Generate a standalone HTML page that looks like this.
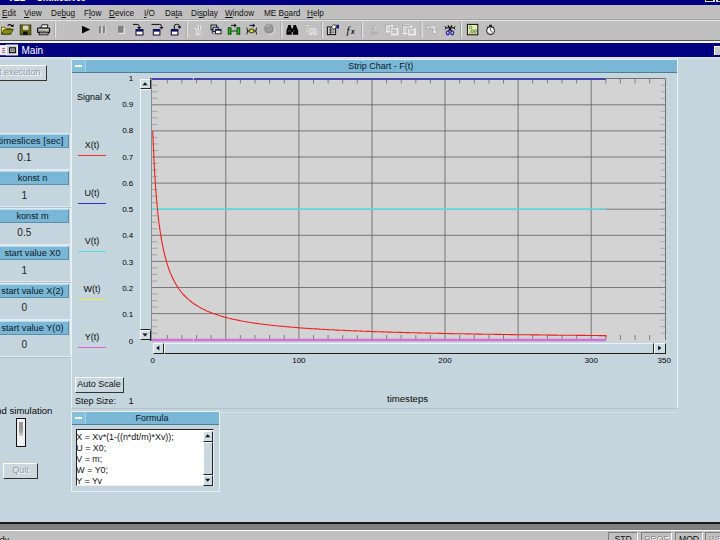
<!DOCTYPE html>
<html><head><meta charset="utf-8"><title>VEE - Main</title>
<style>
html,body{margin:0;padding:0;}
body{width:720px;height:540px;overflow:hidden;position:relative;background:#c5d5de;font-family:"Liberation Sans",sans-serif;font-size:9px;color:#0a0a0a;}
.abs{position:absolute;}
.t{position:absolute;white-space:nowrap;line-height:1;}
.c{text-align:center;}
.r{text-align:right;}
u{text-decoration:underline;}
/* top chrome */
#title{left:0;top:0;width:720px;height:4.5px;background:#000080;overflow:hidden;}
#menubar{left:0;top:4.5px;width:720px;height:15.5px;background:#c0c0c0;}
#menubar .t{top:5px;font-size:8.2px;color:#111;}
#tb{left:0;top:19px;width:720px;height:21px;background:#c0c0c0;border-top:1px solid #a4a4a4;box-shadow:inset 0 1px 0 #e4e4e4;box-sizing:border-box;}
.sep{position:absolute;top:23px;width:1px;height:15px;background:#8a8a8a;border-right:1px solid #eee;}
#tbline{left:0;top:39.5px;width:720px;height:1.5px;background:#555;}
#tbline2{left:0;top:41px;width:720px;height:2px;background:#f4f4f4;}
#maintitle{left:0;top:43px;width:720px;height:14px;background:#000080;}
#mainunder{left:0;top:57px;width:720px;height:3px;background:linear-gradient(#e2ecf1,#c5d5de);}
/* widgets */
.wframe{position:absolute;left:-4px;width:73px;height:35px;border:1px solid #dfe9ee;box-shadow:0 1px 0 #b2c1c9;background:#c5d5de;}
.whdr{position:absolute;left:-3px;width:71px;height:12.300px;background:#7ab6d6;border-bottom:1px solid #5f8ea8;border-right:1px solid #5f8ea8;border-top:1px solid #b5dcee;font-size:9.200px;line-height:12px;text-align:center;white-space:nowrap;color:#0a1a2a;}
.wval{position:absolute;left:0.300px;width:48px;text-align:center;font-size:10.100px;line-height:1;color:#222;}
.panel{position:absolute;border:1px solid #e9f1f5;background:#c5d5de;box-sizing:border-box;}
.ptitle{position:absolute;left:0;top:0;right:0;height:12px;padding-left:13px;background:#7ab6d6;border-bottom:1px solid #4f7d96;font-size:9px;line-height:12px;text-align:center;color:#0a1a2a;}
.pmenu{position:absolute;left:0;top:0;width:13px;height:12px;border-right:1px solid #9fd0e6;background:#86c0dc;}
.pmenu:after{content:"";position:absolute;left:3px;top:5px;width:7px;height:2px;background:#f4fbff;}
.btn{position:absolute;box-sizing:border-box;background:#c9d7df;border-top:1px solid #fff;border-left:1px solid #fff;border-right:1px solid #333;border-bottom:1px solid #333;font-size:9px;text-align:center;white-space:nowrap;}
.dis{color:#8f9aa0;text-shadow:1px 1px 0 #fff;}
.lg{position:absolute;left:78px;width:28px;height:1.3px;}
.lgt{position:absolute;left:72px;width:40px;text-align:center;font-size:9px;line-height:1;white-space:nowrap;}
.yl{position:absolute;left:109.3px;width:24px;text-align:right;font-size:8px;line-height:1;color:#000;}
.xl{position:absolute;top:356.5px;width:30px;text-align:center;font-size:8px;line-height:1;color:#000;}
.sb{position:absolute;box-sizing:border-box;background:#cfdde4;border-top:1px solid #fff;border-left:1px solid #fff;border-right:1px solid #222;border-bottom:1px solid #222;}
.fl{position:absolute;left:76.3px;font-size:8.9px;line-height:1;white-space:nowrap;color:#111;}
.stbox{position:absolute;top:532px;height:10px;box-sizing:border-box;border-top:1px solid #808080;border-left:1px solid #808080;border-right:1px solid #fff;background:#c0c0c0;font-size:8.6px;text-align:center;line-height:12.5px;color:#111;}
</style></head>
<body>
<!-- window title (cut off) -->
<div id="title" class="abs"><span class="t" style="left:8px;top:-5.6px;font-size:8.6px;font-weight:bold;color:#fff;word-spacing:2px">VEE - Untitled.vee</span>
<div class="abs" style="left:704.7px;top:-8px;width:10.3px;height:10.3px;background:#dcdcdc"><div class="abs" style="left:1.5px;top:5px;width:7px;height:3.8px;background:#000"></div></div><div class="abs" style="left:716px;top:-8px;width:10.3px;height:10.3px;background:#dcdcdc"><div class="abs" style="left:1.5px;top:5px;width:7px;height:3.8px;background:#000"></div></div></div>
<div id="menubar" class="abs">
<span class="t" style="left:2px"><u>E</u>dit</span>
<span class="t" style="left:24px"><u>V</u>iew</span>
<span class="t" style="left:51px">De<u>b</u>ug</span>
<span class="t" style="left:84px">F<u>l</u>ow</span>
<span class="t" style="left:109px"><u>D</u>evice</span>
<span class="t" style="left:144px"><u>I</u>/O</span>
<span class="t" style="left:165px">Da<u>t</u>a</span>
<span class="t" style="left:191px">Di<u>s</u>play</span>
<span class="t" style="left:225px"><u>W</u>indow</span>
<span class="t" style="left:264px">ME B<u>o</u>ard</span>
<span class="t" style="left:307px"><u>H</u>elp</span>
</div>
<div id="tb" class="abs"></div>
<svg class="abs" style="left:0;top:20px" width="720" height="20" viewBox="0 20 720 20">
<!-- separators -->
<g stroke-width="1">
<path d="M54.800 22V38M186.3 22V38M280.8 22V38M321.7 22V38M361.7 22V38M421 22V38M460.6 22V38" stroke="#9a9a9a" stroke-width="0.9"/>
<path d="M55.600 22V38M187.3 22V38M281.8 22V38M322.7 22V38M362.7 22V38M422 22V38M461.6 22V38" stroke="#f2f2f2" stroke-width="0.9"/>
</g>
<!-- open folder -->
<path d="M1.6 27.2h3.6l1 1.2h4.6v5.800h-9.200z" fill="#f0f060" stroke="#4a4a08" stroke-width="0.8"/>
<path d="M1.6 34.200l2.600-4.800h9.200l-3 4.800z" fill="#8a8a1a" stroke="#3a3a06" stroke-width="0.9"/>
<path d="M7.600 25.600q2.600-2 4.600 0.400" fill="none" stroke="#000" stroke-width="1.2"/><path d="M10.600 26.800h3v-2.800z" fill="#000"/>
<!-- save -->
<rect x="20.2" y="25" width="10.6" height="9.8" fill="#6a6a14" stroke="#2e2e06" stroke-width="0.9"/>
<rect x="23" y="25.6" width="5.4" height="4.2" fill="#d8d8c8"/>
<rect x="23" y="31.6" width="4.6" height="3.2" fill="#101010"/>
<!-- print -->
<path d="M40.600 28.200l1.400-3.400h6l-1 3.400z" fill="#fafafa" stroke="#111" stroke-width="0.9"/>
<rect x="37.600" y="28" width="12" height="4.600" rx="0.8" fill="#9c9c9c" stroke="#050505" stroke-width="1.1"/>
<path d="M38.400 29.600h10.400" stroke="#e4e4e4" stroke-width="0.8"/>
<rect x="39.200" y="32.200" width="8.800" height="2.600" fill="#f4f4f4" stroke="#0a0a0a" stroke-width="0.9"/>
<path d="M40 33.600h7" stroke="#555" stroke-width="0.600"/>
<rect x="46" y="30.300" width="1.600" height="1" fill="#e8e060"/>
<!-- play / pause / stop -->
<path d="M82 25.8v7.6l8.3-3.8z" fill="#050505"/>
<path d="M100.6 26.6v7.2M104.6 26.6v7.2" stroke="#fafafa" stroke-width="1.8"/>
<path d="M100 26v7.2M104 26v7.2" stroke="#7e7e7e" stroke-width="1.9"/>
<rect x="118.8" y="26.8" width="5.8" height="6.8" fill="#f8f8f8"/>
<rect x="118" y="26" width="5.6" height="6.8" fill="#808080"/>
<!-- step into / over / out -->
<g fill="#fff" stroke="#0a0a30" stroke-width="1">
<rect x="136" y="29.6" width="7" height="5.4"/><rect x="153.3" y="29.6" width="6.6" height="5.4"/><rect x="171.3" y="29.6" width="6.6" height="5.4"/>
</g>
<g fill="#10106a"><rect x="136" y="29.4" width="7" height="2.2"/><rect x="153.3" y="29.4" width="6.6" height="2.2"/><rect x="171.3" y="29.4" width="6.6" height="2.2"/></g>
<g fill="none" stroke="#0a0a0a" stroke-width="1">
<path d="M133 24.4h4.2q2 0 2 2v1"/><path d="M151.5 24.4h8q2 0 2 2v1"/><path d="M174.300 29.200v-3q0-1.800 2-1.800h1.200q2 0 2 2v0.600"/>
</g>
<path d="M137 27h4.4l-2.2 2.2zM159.3 27h4.4l-2.2 2.2zM177.300 26.600h4.400l-2.200 2.200z" fill="#0a0a0a"/>
<!-- hand disabled -->
<path d="M195.5 34.2v-3l-1.4-2.2 1.2-.6 1.4 1.4v-4.6h1.5v3.8l1.2-3.2h1.2v3.8h1.4v3.6l-1 1.6z" fill="#cecece" stroke="#ececec" stroke-width="0.900"/>
<path d="M195 33.800v-2.800l-1.200-2M197 25.400v4M199.500 25.600v3.400M201.800 29v3.600l-1 1.600" fill="none" stroke="#9c9c9c" stroke-width="0.700"/>
<!-- stacked windows -->
<rect x="211" y="25" width="5.6" height="4.6" fill="#d8d8e8" stroke="#0a0a0a" stroke-width="0.9"/>
<rect x="213" y="27.2" width="5.2" height="4.2" fill="#c8c8e0" stroke="#0a0a0a" stroke-width="0.9"/>
<rect x="215.6" y="29.4" width="5.4" height="4.4" fill="#fff" stroke="#0a0a20" stroke-width="0.9"/>
<rect x="215.6" y="29.2" width="5.4" height="1.6" fill="#14146a"/>
<path d="M212 30v2.6l1.6 1.4" fill="none" stroke="#111" stroke-width="0.8"/>
<!-- green bars -->
<rect x="228.300" y="27.800" width="2.700" height="6.400" fill="#1cc01c" stroke="#0a4a0a" stroke-width="1"/>
<rect x="237" y="27.800" width="2.700" height="6.400" fill="#1cc01c" stroke="#0a4a0a" stroke-width="1"/>
<path d="M231.400 31h5.400" stroke="#104810" stroke-width="1.100"/>
<path d="M231 25.400h4" stroke="#111" stroke-width="1"/><path d="M234.300 23.600v3.800l2.400-1.900z" fill="#050505"/>
<!-- yellow blob -->
<path d="M246.800 27.600q1.600 3.400 0 6.800M256.600 27.600q-1.600 3.400 0 6.800" fill="none" stroke="#222" stroke-width="1"/>
<path d="M247.600 31h8.200" stroke="#1a1a1a" stroke-width="1"/>
<ellipse cx="251.600" cy="30.900" rx="2.700" ry="2" fill="#8c9410" stroke="#33330a" stroke-width="0.800"/>
<ellipse cx="251.600" cy="30.900" rx="1.300" ry="1" fill="#f2f244"/>
<path d="M249.400 25.400h4" stroke="#111" stroke-width="1"/><path d="M252.800 23.600v3.800l2.400-1.900z" fill="#0a0a30"/>
<!-- gray ball -->
<circle cx="269.5" cy="29.4" r="5.2" fill="#f2f2f2"/>
<circle cx="269" cy="28.9" r="5.1" fill="#949494"/>
<path d="M266.5 27.2q1.2-2 3-1.8" stroke="#d8d8d8" stroke-width="0.9" fill="none"/>
<path d="M268 30.2q2.5 0.5 3-2.4" stroke="#b8b8b8" stroke-width="0.8" fill="none"/>
<!-- binoculars -->
<path d="M288.400 25h2.200l1.200 3.400v6.300h-5.400v-4.200zM293.600 25h2.200l2.400 5.500v4.200h-5.400v-6.300z" fill="#050505"/>
<rect x="291" y="28.600" width="2.600" height="3.400" fill="#050505"/>
<path d="M288.300 30.400v1.200M290.200 30.400v1.200M294 30.400v1.200" stroke="#c8c8c8" stroke-width="0.600"/>
<!-- find next disabled -->
<path d="M305.4 25.6h3.2M305.4 28h3M305.4 30.6h2.4" stroke="#f8f8f8" stroke-width="1.2"/>
<path d="M304.8 25h3.2M304.8 27.4h3M304.8 30h2.4" stroke="#a6a6a6" stroke-width="0.9"/>
<path d="M309.4 34.6v-3.2l1.2-2.8h1.6l.6 1.4.6-1.4h1.6l1.2 2.8v3.2h-2.4v-2.6h-1.8v2.600z" fill="#cdcdcd" stroke="#ececec" stroke-width="0.800"/>
<!-- properties -->
<rect x="327.4" y="27" width="8.2" height="7.6" fill="#f2f2f2" stroke="#080808" stroke-width="1"/>
<path d="M328.6 29.2h6M328.6 31h6M328.6 32.8h6M330.6 27.4v7" stroke="#111" stroke-width="0.7"/>
<path d="M331 27l2.2-2h3l-.4 3.400-2 .6z" fill="#fafafa" stroke="#111" stroke-width="0.7"/>
<rect x="336.400" y="24.8" width="2.6" height="3.6" fill="#14147a"/>
<!-- fx -->
<text x="346.400" y="33.6" font-family="'Liberation Serif',serif" font-style="italic" font-size="11" fill="#000">f</text>
<text x="351" y="34.200" font-family="'Liberation Sans',sans-serif" font-weight="bold" font-style="italic" font-size="6.500" fill="#080808">x</text>
<!-- cut disabled -->
<path d="M372.400 25.400l3.200 6.200M376.200 25.400l-3.200 6.200" stroke="#fafafa" stroke-width="1"/>
<path d="M371.800 25l3.200 6.200M375.600 25l-3.200 6.200" stroke="#9c9c9c" stroke-width="0.9"/>
<circle cx="372.200" cy="33" r="1.300" fill="none" stroke="#a4a4a4" stroke-width="0.8"/><circle cx="375.600" cy="33" r="1.300" fill="none" stroke="#a4a4a4" stroke-width="0.8"/>
<!-- copy disabled -->
<rect x="386.400" y="25.400" width="6" height="6.400" fill="#d2d2d2" stroke="#fafafa" stroke-width="1"/>
<rect x="391.400" y="28.400" width="6.400" height="6.400" fill="#d2d2d2" stroke="#fafafa" stroke-width="1"/>
<path d="M385.800 31.400v-6.600h5.600M390.800 34.400v-6.600h6" fill="none" stroke="#a2a2a2" stroke-width="0.8"/>
<path d="M392.600 30.400h3.600M392.600 32.200h3.600" stroke="#a8a8a8" stroke-width="0.7"/>
<!-- paste disabled -->
<rect x="403.400" y="26" width="8" height="7.600" fill="#d0d0d0" stroke="#fafafa" stroke-width="1"/>
<rect x="405.400" y="24.800" width="4" height="2" fill="#b4b4b4" stroke="#f4f4f4" stroke-width="0.6"/>
<rect x="408.400" y="28.800" width="6.800" height="6" fill="#d6d6d6" stroke="#fafafa" stroke-width="1"/>
<path d="M402.800 33v-7.400h8M407.800 34.400v-6h6.600" fill="none" stroke="#a2a2a2" stroke-width="0.8"/>
<path d="M409.600 31h4M409.600 32.800h4" stroke="#a8a8a8" stroke-width="0.7"/>
<!-- disabled boxes -->
<rect x="426.400" y="25.800" width="4" height="3.200" fill="#d8d8d8" stroke="#a8a8a8" stroke-width="0.8"/>
<rect x="432.800" y="29.800" width="4" height="3.600" fill="#e8e8e8" stroke="#a8a8a8" stroke-width="0.8"/>
<path d="M430.800 27h3.600v2.600" fill="none" stroke="#f6f6f6" stroke-width="1"/>
<!-- blue scissors/tools -->
<path d="M445 26.200q1.800 1.600 0 3.200M455 26.200q-1.800 1.600 0 3.200" fill="none" stroke="#111" stroke-width="1"/>
<path d="M446 27.800h8" stroke="#111" stroke-width="1.100"/>
<path d="M448 25.400l3.600 6M452 25.400l-3.600 6" stroke="#0a0a0a" stroke-width="1.200"/>
<ellipse cx="447.800" cy="32.800" rx="1.500" ry="2" fill="none" stroke="#2424b4" stroke-width="1.200"/>
<ellipse cx="452.200" cy="32.800" rx="1.500" ry="2" fill="none" stroke="#2424b4" stroke-width="1.200"/>
<!-- picture -->
<rect x="467.400" y="24.400" width="10.400" height="10.400" fill="#ecebb4" stroke="#0a0a0a" stroke-width="1"/>
<circle cx="470.600" cy="27.400" r="1.300" fill="#f4f4c0" stroke="#2e8a2e" stroke-width="0.8"/>
<circle cx="472.200" cy="31" r="1.300" fill="#f4f4c0" stroke="#2e8a2e" stroke-width="0.8"/>
<circle cx="475.200" cy="31" r="1.300" fill="#f4f4c0" stroke="#2e8a2e" stroke-width="0.8"/>
<path d="M469 33h7.600" stroke="#7a7a30" stroke-width="0.600"/>
<!-- stopwatch -->
<circle cx="490.600" cy="30.600" r="4" fill="#f4f4f4" stroke="#101010" stroke-width="1"/>
<path d="M489.600 25.200h2v1.600h-2zM487 26.600l1.200 1.200M494.200 26.600l-1.200 1.200" stroke="#111" stroke-width="0.900" fill="#111"/>
<path d="M490.600 30.600v-2.600M490.600 30.600l1.800 1.200" stroke="#222" stroke-width="0.700" fill="none"/>
<path d="M487.600 32.600q3 2.400 6-0.200" stroke="#888" stroke-width="0.800" fill="none"/>
</svg>

<div id="tbline" class="abs"></div><div id="tbline2" class="abs"></div>
<div id="maintitle" class="abs">
<span class="t" style="left:21.5px;top:3.3px;font-size:10px;color:#fff">Main</span>
</div>
<svg class="abs" style="left:0;top:43px" width="60" height="14" viewBox="0 43 60 14">
<rect x="-4" y="45.400" width="9.400" height="9.400" fill="#f6eef2" stroke="#fafafa" stroke-width="0.800"/>
<path d="M2 48.400h3M2 50.400h3M2 52.400h3" stroke="#a04a7a" stroke-width="0.900"/>
<rect x="6.400" y="45.200" width="11" height="9.600" fill="#c4c4c4" stroke="#fafafa" stroke-width="1.300"/>
<rect x="9.600" y="47.800" width="5.800" height="4.800" fill="#b8b8b8" stroke="#101010" stroke-width="1.1"/>
<path d="M11.700 49.300v2M13.300 49.300v2" stroke="#333" stroke-width="0.700"/>
</svg>
<div class="abs" style="left:714px;top:46px;width:10px;height:9px;background:#c8c8c8;border-top:1px solid #fff;border-left:1px solid #fff;box-sizing:border-box"></div>

<div id="mainunder" class="abs"></div>

<!-- left column -->
<div class="btn dis" style="left:-40px;top:65px;width:87px;height:16px;line-height:13.500px;font-size:9px;text-align:right;padding-right:5.500px;background:#ccd8de">Start executon</div>

<div class="wframe" style="top:133.0px"></div>
<div class="whdr" style="top:133.8px;font-size:9.6px;text-align:right;padding-right:4.500px;width:66.500px">timeslices [sec]</div>
<div class="wval" style="top:153.2px">0.1</div>
<div class="wframe" style="top:170.4px"></div>
<div class="whdr" style="top:171.2px">konst n</div>
<div class="wval" style="top:190.6px">1</div>
<div class="wframe" style="top:207.9px"></div>
<div class="whdr" style="top:208.7px">konst m</div>
<div class="wval" style="top:228.1px">0.5</div>
<div class="wframe" style="top:245.4px"></div>
<div class="whdr" style="top:246.2px">start value X0</div>
<div class="wval" style="top:265.6px">1</div>
<div class="wframe" style="top:282.8px"></div>
<div class="whdr" style="top:283.6px">start value X(2)</div>
<div class="wval" style="top:303.0px">0</div>
<div class="wframe" style="top:320.2px"></div>
<div class="whdr" style="top:321.1px">start value Y(0)</div>
<div class="wval" style="top:340.4px">0</div>

<span class="t" style="left:-10px;top:406px;font-size:9.5px">End simulation</span>
<div class="abs" style="left:16px;top:418px;width:10px;height:29px;box-sizing:border-box;border:1.5px solid #111;background:#f2f2f2"><div class="abs" style="left:1.5px;top:2.5px;width:4px;height:14px;background:linear-gradient(#9a9a9a 60%,#d8d8d8)"></div></div>
<div class="btn dis" style="left:3px;top:463px;width:35px;height:16px;line-height:13px;background:#ccd8de">Quit</div>

<!-- strip chart panel -->
<div class="abs" style="left:220px;top:411.500px;width:458px;height:1px;background:#d3e0e7"></div>
<div class="panel" style="left:71px;top:59px;width:606.500px;height:350px;border-bottom-color:#b4c3cb">
<div class="ptitle">Strip Chart - F(t)<div class="pmenu"></div></div>
</div>
<span class="t" style="left:77px;top:93px;font-size:9px">Signal X</span>
<span class="lgt" style="top:140.7px">X(t)</span>
<div class="lg" style="top:154.5px;background:#f03030"></div>
<span class="lgt" style="top:188.8px">U(t)</span>
<div class="lg" style="top:202.6px;background:#3030c8"></div>
<span class="lgt" style="top:236.9px">V(t)</span>
<div class="lg" style="top:250.7px;background:#50e0e0"></div>
<span class="lgt" style="top:285.0px">W(t)</span>
<div class="lg" style="top:298.8px;background:#e8e840"></div>
<span class="lgt" style="top:333.1px">Y(t)</span>
<div class="lg" style="top:346.9px;background:#e060e0"></div>
<span class="yl" style="top:74.6px">1</span>
<span class="yl" style="top:100.9px">0.9</span>
<span class="yl" style="top:127.2px">0.8</span>
<span class="yl" style="top:153.5px">0.7</span>
<span class="yl" style="top:179.8px">0.6</span>
<span class="yl" style="top:206.1px">0.5</span>
<span class="yl" style="top:232.4px">0.4</span>
<span class="yl" style="top:258.7px">0.3</span>
<span class="yl" style="top:285.0px">0.2</span>
<span class="yl" style="top:311.3px">0.1</span>
<span class="yl" style="top:337.6px">0</span>
<span class="xl" style="left:137.7px">0</span>
<span class="xl" style="left:283.9px">100</span>
<span class="xl" style="left:430.0px">200</span>
<span class="xl" style="left:576.2px">300</span>
<span class="xl" style="left:649.3px">350</span>
<svg class="abs" style="left:0;top:0" width="720" height="540" viewBox="0 0 720 540">
<rect x="151.5" y="78" width="514" height="263" fill="#d3d3d3"/>
<line x1="152" x2="665.5" y1="313.6" y2="313.6" stroke="#585858" stroke-width="0.75"/>
<line x1="152" x2="665.5" y1="287.5" y2="287.5" stroke="#585858" stroke-width="0.75"/>
<line x1="152" x2="665.5" y1="261.4" y2="261.4" stroke="#585858" stroke-width="0.75"/>
<line x1="152" x2="665.5" y1="235.3" y2="235.3" stroke="#585858" stroke-width="0.75"/>
<line x1="152" x2="665.5" y1="209.2" y2="209.2" stroke="#585858" stroke-width="0.75"/>
<line x1="152" x2="665.5" y1="183.1" y2="183.1" stroke="#585858" stroke-width="0.75"/>
<line x1="152" x2="665.5" y1="157.0" y2="157.0" stroke="#585858" stroke-width="0.75"/>
<line x1="152" x2="665.5" y1="130.9" y2="130.9" stroke="#585858" stroke-width="0.75"/>
<line x1="152" x2="665.5" y1="104.8" y2="104.8" stroke="#585858" stroke-width="0.75"/>
<line x1="225.8" x2="225.8" y1="79" y2="340" stroke="#585858" stroke-width="0.75"/>
<line x1="298.9" x2="298.9" y1="79" y2="340" stroke="#585858" stroke-width="0.75"/>
<line x1="372.0" x2="372.0" y1="79" y2="340" stroke="#585858" stroke-width="0.75"/>
<line x1="445.0" x2="445.0" y1="79" y2="340" stroke="#585858" stroke-width="0.75"/>
<line x1="518.1" x2="518.1" y1="79" y2="340" stroke="#585858" stroke-width="0.75"/>
<line x1="591.2" x2="591.2" y1="79" y2="340" stroke="#585858" stroke-width="0.75"/>
<line x1="152" x2="157.5" y1="333.2" y2="333.2" stroke="#909090" stroke-width="0.7"/>
<line x1="660.5" x2="665.5" y1="333.2" y2="333.2" stroke="#9a9a9a" stroke-width="0.7"/>
<line x1="152" x2="157.5" y1="326.6" y2="326.6" stroke="#909090" stroke-width="0.7"/>
<line x1="660.5" x2="665.5" y1="326.6" y2="326.6" stroke="#9a9a9a" stroke-width="0.7"/>
<line x1="152" x2="157.5" y1="320.1" y2="320.1" stroke="#909090" stroke-width="0.7"/>
<line x1="660.5" x2="665.5" y1="320.1" y2="320.1" stroke="#9a9a9a" stroke-width="0.7"/>
<line x1="152" x2="157.5" y1="307.1" y2="307.1" stroke="#909090" stroke-width="0.7"/>
<line x1="660.5" x2="665.5" y1="307.1" y2="307.1" stroke="#9a9a9a" stroke-width="0.7"/>
<line x1="152" x2="157.5" y1="300.6" y2="300.6" stroke="#909090" stroke-width="0.7"/>
<line x1="660.5" x2="665.5" y1="300.6" y2="300.6" stroke="#9a9a9a" stroke-width="0.7"/>
<line x1="152" x2="157.5" y1="294.0" y2="294.0" stroke="#909090" stroke-width="0.7"/>
<line x1="660.5" x2="665.5" y1="294.0" y2="294.0" stroke="#9a9a9a" stroke-width="0.7"/>
<line x1="152" x2="157.5" y1="281.0" y2="281.0" stroke="#909090" stroke-width="0.7"/>
<line x1="660.5" x2="665.5" y1="281.0" y2="281.0" stroke="#9a9a9a" stroke-width="0.7"/>
<line x1="152" x2="157.5" y1="274.4" y2="274.4" stroke="#909090" stroke-width="0.7"/>
<line x1="660.5" x2="665.5" y1="274.4" y2="274.4" stroke="#9a9a9a" stroke-width="0.7"/>
<line x1="152" x2="157.5" y1="267.9" y2="267.9" stroke="#909090" stroke-width="0.7"/>
<line x1="660.5" x2="665.5" y1="267.9" y2="267.9" stroke="#9a9a9a" stroke-width="0.7"/>
<line x1="152" x2="157.5" y1="254.9" y2="254.9" stroke="#909090" stroke-width="0.7"/>
<line x1="660.5" x2="665.5" y1="254.9" y2="254.9" stroke="#9a9a9a" stroke-width="0.7"/>
<line x1="152" x2="157.5" y1="248.3" y2="248.3" stroke="#909090" stroke-width="0.7"/>
<line x1="660.5" x2="665.5" y1="248.3" y2="248.3" stroke="#9a9a9a" stroke-width="0.7"/>
<line x1="152" x2="157.5" y1="241.8" y2="241.8" stroke="#909090" stroke-width="0.7"/>
<line x1="660.5" x2="665.5" y1="241.8" y2="241.8" stroke="#9a9a9a" stroke-width="0.7"/>
<line x1="152" x2="157.5" y1="228.8" y2="228.8" stroke="#909090" stroke-width="0.7"/>
<line x1="660.5" x2="665.5" y1="228.8" y2="228.8" stroke="#9a9a9a" stroke-width="0.7"/>
<line x1="152" x2="157.5" y1="222.2" y2="222.2" stroke="#909090" stroke-width="0.7"/>
<line x1="660.5" x2="665.5" y1="222.2" y2="222.2" stroke="#9a9a9a" stroke-width="0.7"/>
<line x1="152" x2="157.5" y1="215.7" y2="215.7" stroke="#909090" stroke-width="0.7"/>
<line x1="660.5" x2="665.5" y1="215.7" y2="215.7" stroke="#9a9a9a" stroke-width="0.7"/>
<line x1="152" x2="157.5" y1="202.7" y2="202.7" stroke="#909090" stroke-width="0.7"/>
<line x1="660.5" x2="665.5" y1="202.7" y2="202.7" stroke="#9a9a9a" stroke-width="0.7"/>
<line x1="152" x2="157.5" y1="196.1" y2="196.1" stroke="#909090" stroke-width="0.7"/>
<line x1="660.5" x2="665.5" y1="196.1" y2="196.1" stroke="#9a9a9a" stroke-width="0.7"/>
<line x1="152" x2="157.5" y1="189.6" y2="189.6" stroke="#909090" stroke-width="0.7"/>
<line x1="660.5" x2="665.5" y1="189.6" y2="189.6" stroke="#9a9a9a" stroke-width="0.7"/>
<line x1="152" x2="157.5" y1="176.6" y2="176.6" stroke="#909090" stroke-width="0.7"/>
<line x1="660.5" x2="665.5" y1="176.6" y2="176.6" stroke="#9a9a9a" stroke-width="0.7"/>
<line x1="152" x2="157.5" y1="170.0" y2="170.0" stroke="#909090" stroke-width="0.7"/>
<line x1="660.5" x2="665.5" y1="170.0" y2="170.0" stroke="#9a9a9a" stroke-width="0.7"/>
<line x1="152" x2="157.5" y1="163.5" y2="163.5" stroke="#909090" stroke-width="0.7"/>
<line x1="660.5" x2="665.5" y1="163.5" y2="163.5" stroke="#9a9a9a" stroke-width="0.7"/>
<line x1="152" x2="157.5" y1="150.5" y2="150.5" stroke="#909090" stroke-width="0.7"/>
<line x1="660.5" x2="665.5" y1="150.5" y2="150.5" stroke="#9a9a9a" stroke-width="0.7"/>
<line x1="152" x2="157.5" y1="143.9" y2="143.9" stroke="#909090" stroke-width="0.7"/>
<line x1="660.5" x2="665.5" y1="143.9" y2="143.9" stroke="#9a9a9a" stroke-width="0.7"/>
<line x1="152" x2="157.5" y1="137.4" y2="137.4" stroke="#909090" stroke-width="0.7"/>
<line x1="660.5" x2="665.5" y1="137.4" y2="137.4" stroke="#9a9a9a" stroke-width="0.7"/>
<line x1="152" x2="157.5" y1="124.4" y2="124.4" stroke="#909090" stroke-width="0.7"/>
<line x1="660.5" x2="665.5" y1="124.4" y2="124.4" stroke="#9a9a9a" stroke-width="0.7"/>
<line x1="152" x2="157.5" y1="117.8" y2="117.8" stroke="#909090" stroke-width="0.7"/>
<line x1="660.5" x2="665.5" y1="117.8" y2="117.8" stroke="#9a9a9a" stroke-width="0.7"/>
<line x1="152" x2="157.5" y1="111.3" y2="111.3" stroke="#909090" stroke-width="0.7"/>
<line x1="660.5" x2="665.5" y1="111.3" y2="111.3" stroke="#9a9a9a" stroke-width="0.7"/>
<line x1="152" x2="157.5" y1="98.3" y2="98.3" stroke="#909090" stroke-width="0.7"/>
<line x1="660.5" x2="665.5" y1="98.3" y2="98.3" stroke="#9a9a9a" stroke-width="0.7"/>
<line x1="152" x2="157.5" y1="91.8" y2="91.8" stroke="#909090" stroke-width="0.7"/>
<line x1="660.5" x2="665.5" y1="91.8" y2="91.8" stroke="#9a9a9a" stroke-width="0.7"/>
<line x1="152" x2="157.5" y1="85.2" y2="85.2" stroke="#909090" stroke-width="0.7"/>
<line x1="660.5" x2="665.5" y1="85.2" y2="85.2" stroke="#9a9a9a" stroke-width="0.7"/>
<line x1="167.3" x2="167.3" y1="79" y2="83.5" stroke="#6a6a6a" stroke-width="0.8"/>
<line x1="167.3" x2="167.3" y1="335" y2="340" stroke="#6a6a6a" stroke-width="0.8"/>
<line x1="181.9" x2="181.9" y1="79" y2="83.5" stroke="#6a6a6a" stroke-width="0.8"/>
<line x1="181.9" x2="181.9" y1="335" y2="340" stroke="#6a6a6a" stroke-width="0.8"/>
<line x1="196.6" x2="196.6" y1="79" y2="83.5" stroke="#6a6a6a" stroke-width="0.8"/>
<line x1="196.6" x2="196.6" y1="335" y2="340" stroke="#6a6a6a" stroke-width="0.8"/>
<line x1="211.2" x2="211.2" y1="79" y2="83.5" stroke="#6a6a6a" stroke-width="0.8"/>
<line x1="211.2" x2="211.2" y1="335" y2="340" stroke="#6a6a6a" stroke-width="0.8"/>
<line x1="240.4" x2="240.4" y1="79" y2="83.5" stroke="#6a6a6a" stroke-width="0.8"/>
<line x1="240.4" x2="240.4" y1="335" y2="340" stroke="#6a6a6a" stroke-width="0.8"/>
<line x1="255.0" x2="255.0" y1="79" y2="83.5" stroke="#6a6a6a" stroke-width="0.8"/>
<line x1="255.0" x2="255.0" y1="335" y2="340" stroke="#6a6a6a" stroke-width="0.8"/>
<line x1="269.6" x2="269.6" y1="79" y2="83.5" stroke="#6a6a6a" stroke-width="0.8"/>
<line x1="269.6" x2="269.6" y1="335" y2="340" stroke="#6a6a6a" stroke-width="0.8"/>
<line x1="284.3" x2="284.3" y1="79" y2="83.5" stroke="#6a6a6a" stroke-width="0.8"/>
<line x1="284.3" x2="284.3" y1="335" y2="340" stroke="#6a6a6a" stroke-width="0.8"/>
<line x1="313.5" x2="313.5" y1="79" y2="83.5" stroke="#6a6a6a" stroke-width="0.8"/>
<line x1="313.5" x2="313.5" y1="335" y2="340" stroke="#6a6a6a" stroke-width="0.8"/>
<line x1="328.1" x2="328.1" y1="79" y2="83.5" stroke="#6a6a6a" stroke-width="0.8"/>
<line x1="328.1" x2="328.1" y1="335" y2="340" stroke="#6a6a6a" stroke-width="0.8"/>
<line x1="342.7" x2="342.7" y1="79" y2="83.5" stroke="#6a6a6a" stroke-width="0.8"/>
<line x1="342.7" x2="342.7" y1="335" y2="340" stroke="#6a6a6a" stroke-width="0.8"/>
<line x1="357.3" x2="357.3" y1="79" y2="83.5" stroke="#6a6a6a" stroke-width="0.8"/>
<line x1="357.3" x2="357.3" y1="335" y2="340" stroke="#6a6a6a" stroke-width="0.8"/>
<line x1="386.6" x2="386.6" y1="79" y2="83.5" stroke="#6a6a6a" stroke-width="0.8"/>
<line x1="386.6" x2="386.6" y1="335" y2="340" stroke="#6a6a6a" stroke-width="0.8"/>
<line x1="401.2" x2="401.2" y1="79" y2="83.5" stroke="#6a6a6a" stroke-width="0.8"/>
<line x1="401.2" x2="401.2" y1="335" y2="340" stroke="#6a6a6a" stroke-width="0.8"/>
<line x1="415.8" x2="415.8" y1="79" y2="83.5" stroke="#6a6a6a" stroke-width="0.8"/>
<line x1="415.8" x2="415.8" y1="335" y2="340" stroke="#6a6a6a" stroke-width="0.8"/>
<line x1="430.4" x2="430.4" y1="79" y2="83.5" stroke="#6a6a6a" stroke-width="0.8"/>
<line x1="430.4" x2="430.4" y1="335" y2="340" stroke="#6a6a6a" stroke-width="0.8"/>
<line x1="459.7" x2="459.7" y1="79" y2="83.5" stroke="#6a6a6a" stroke-width="0.8"/>
<line x1="459.7" x2="459.7" y1="335" y2="340" stroke="#6a6a6a" stroke-width="0.8"/>
<line x1="474.3" x2="474.3" y1="79" y2="83.5" stroke="#6a6a6a" stroke-width="0.8"/>
<line x1="474.3" x2="474.3" y1="335" y2="340" stroke="#6a6a6a" stroke-width="0.8"/>
<line x1="488.9" x2="488.9" y1="79" y2="83.5" stroke="#6a6a6a" stroke-width="0.8"/>
<line x1="488.9" x2="488.9" y1="335" y2="340" stroke="#6a6a6a" stroke-width="0.8"/>
<line x1="503.5" x2="503.5" y1="79" y2="83.5" stroke="#6a6a6a" stroke-width="0.8"/>
<line x1="503.5" x2="503.5" y1="335" y2="340" stroke="#6a6a6a" stroke-width="0.8"/>
<line x1="532.7" x2="532.7" y1="79" y2="83.5" stroke="#6a6a6a" stroke-width="0.8"/>
<line x1="532.7" x2="532.7" y1="335" y2="340" stroke="#6a6a6a" stroke-width="0.8"/>
<line x1="547.4" x2="547.4" y1="79" y2="83.5" stroke="#6a6a6a" stroke-width="0.8"/>
<line x1="547.4" x2="547.4" y1="335" y2="340" stroke="#6a6a6a" stroke-width="0.8"/>
<line x1="562.0" x2="562.0" y1="79" y2="83.5" stroke="#6a6a6a" stroke-width="0.8"/>
<line x1="562.0" x2="562.0" y1="335" y2="340" stroke="#6a6a6a" stroke-width="0.8"/>
<line x1="576.6" x2="576.6" y1="79" y2="83.5" stroke="#6a6a6a" stroke-width="0.8"/>
<line x1="576.6" x2="576.6" y1="335" y2="340" stroke="#6a6a6a" stroke-width="0.8"/>
<line x1="605.8" x2="605.8" y1="79" y2="83.5" stroke="#6a6a6a" stroke-width="0.8"/>
<line x1="605.8" x2="605.8" y1="335" y2="340" stroke="#6a6a6a" stroke-width="0.8"/>
<line x1="620.4" x2="620.4" y1="79" y2="83.5" stroke="#6a6a6a" stroke-width="0.8"/>
<line x1="620.4" x2="620.4" y1="335" y2="340" stroke="#6a6a6a" stroke-width="0.8"/>
<line x1="635.1" x2="635.1" y1="79" y2="83.5" stroke="#6a6a6a" stroke-width="0.8"/>
<line x1="635.1" x2="635.1" y1="335" y2="340" stroke="#6a6a6a" stroke-width="0.8"/>
<line x1="649.7" x2="649.7" y1="79" y2="83.5" stroke="#6a6a6a" stroke-width="0.8"/>
<line x1="649.7" x2="649.7" y1="335" y2="340" stroke="#6a6a6a" stroke-width="0.8"/>
<line x1="152" x2="605.8" y1="79" y2="79" stroke="#4343ae" stroke-width="2.100"/>
<line x1="152" x2="605.8" y1="209" y2="209" stroke="#5ce6e8" stroke-width="1.600"/>
<polyline points="152.7,130.9 154.2,164.3 155.6,187.9 157.1,205.5 158.5,219.3 160.0,230.4 161.5,239.6 162.9,247.3 164.4,253.8 165.9,259.5 167.3,264.4 168.8,268.7 170.2,272.6 171.7,276.1 173.2,279.2 174.6,282.0 176.1,284.5 177.5,286.9 179.0,289.0 180.5,291.0 181.9,292.8 183.4,294.5 184.9,296.0 186.3,297.5 187.8,298.9 189.2,300.1 190.7,301.3 192.2,302.5 193.6,303.5 195.1,304.5 196.6,305.5 198.0,306.4 199.5,307.2 200.9,308.0 202.4,308.8 203.9,309.5 205.3,310.2 206.8,310.9 208.2,311.5 209.7,312.1 211.2,312.7 212.6,313.3 214.1,313.8 215.6,314.3 217.0,314.8 218.5,315.3 219.9,315.8 221.4,316.2 222.9,316.6 224.3,317.0 225.8,317.4 227.2,317.8 228.7,318.2 230.2,318.5 231.6,318.9 233.1,319.2 234.6,319.5 236.0,319.8 237.5,320.1 238.9,320.4 240.4,320.7 241.9,321.0 243.3,321.3 244.8,321.5 246.2,321.8 247.7,322.0 249.2,322.3 250.6,322.5 252.1,322.7 253.6,322.9 255.0,323.2 256.5,323.4 257.9,323.6 259.4,323.8 260.9,324.0 262.3,324.2 263.8,324.3 265.3,324.5 266.7,324.7 268.2,324.9 269.6,325.0 271.1,325.2 272.6,325.4 274.0,325.5 275.5,325.7 276.9,325.8 278.4,326.0 279.9,326.1 281.3,326.3 282.8,326.4 284.3,326.5 285.7,326.7 287.2,326.8 288.6,326.9 290.1,327.0 291.6,327.2 293.0,327.3 294.5,327.4 295.9,327.5 297.4,327.6 298.9,327.7 300.3,327.9 301.8,328.0 303.3,328.1 304.7,328.2 306.2,328.3 307.6,328.4 309.1,328.5 310.6,328.6 312.0,328.7 313.5,328.8 314.9,328.9 316.4,328.9 317.9,329.0 319.3,329.1 320.8,329.2 322.3,329.3 323.7,329.4 325.2,329.5 326.6,329.5 328.1,329.6 329.6,329.7 331.0,329.8 332.5,329.8 334.0,329.9 335.4,330.0 336.9,330.1 338.3,330.1 339.8,330.2 341.3,330.3 342.7,330.3 344.2,330.4 345.6,330.5 347.1,330.5 348.6,330.6 350.0,330.7 351.5,330.7 353.0,330.8 354.4,330.9 355.9,330.9 357.3,331.0 358.8,331.0 360.3,331.1 361.7,331.1 363.2,331.2 364.6,331.3 366.1,331.3 367.6,331.4 369.0,331.4 370.5,331.5 372.0,331.5 373.4,331.6 374.9,331.6 376.3,331.7 377.8,331.7 379.3,331.8 380.7,331.8 382.2,331.9 383.6,331.9 385.1,332.0 386.6,332.0 388.0,332.1 389.5,332.1 391.0,332.1 392.4,332.2 393.9,332.2 395.3,332.3 396.8,332.3 398.3,332.4 399.7,332.4 401.2,332.4 402.7,332.5 404.1,332.5 405.6,332.6 407.0,332.6 408.5,332.6 410.0,332.7 411.4,332.7 412.9,332.7 414.3,332.8 415.8,332.8 417.3,332.9 418.7,332.9 420.2,332.9 421.7,333.0 423.1,333.0 424.6,333.0 426.0,333.1 427.5,333.1 429.0,333.1 430.4,333.2 431.9,333.2 433.3,333.2 434.8,333.3 436.3,333.3 437.7,333.3 439.2,333.4 440.7,333.4 442.1,333.4 443.6,333.5 445.0,333.5 446.5,333.5 448.0,333.5 449.4,333.6 450.9,333.6 452.3,333.6 453.8,333.7 455.3,333.7 456.7,333.7 458.2,333.7 459.7,333.8 461.1,333.8 462.6,333.8 464.0,333.8 465.5,333.9 467.0,333.9 468.4,333.9 469.9,333.9 471.4,334.0 472.8,334.0 474.3,334.0 475.7,334.0 477.2,334.1 478.7,334.1 480.1,334.1 481.6,334.1 483.0,334.2 484.5,334.2 486.0,334.2 487.4,334.2 488.9,334.3 490.4,334.3 491.8,334.3 493.3,334.3 494.7,334.4 496.2,334.4 497.7,334.4 499.1,334.4 500.6,334.4 502.0,334.5 503.5,334.5 505.0,334.5 506.4,334.5 507.9,334.5 509.4,334.6 510.8,334.6 512.3,334.6 513.7,334.6 515.2,334.6 516.7,334.7 518.1,334.7 519.6,334.7 521.0,334.7 522.5,334.7 524.0,334.8 525.4,334.8 526.9,334.8 528.4,334.8 529.8,334.8 531.3,334.9 532.7,334.9 534.2,334.9 535.7,334.9 537.1,334.9 538.6,334.9 540.1,335.0 541.5,335.0 543.0,335.0 544.4,335.0 545.9,335.0 547.4,335.0 548.8,335.1 550.3,335.1 551.7,335.1 553.2,335.1 554.7,335.1 556.1,335.1 557.6,335.2 559.1,335.2 560.5,335.2 562.0,335.2 563.4,335.2 564.9,335.2 566.4,335.2 567.8,335.3 569.3,335.3 570.7,335.3 572.2,335.3 573.7,335.3 575.1,335.3 576.6,335.4 578.1,335.4 579.5,335.4 581.0,335.4 582.4,335.4 583.9,335.4 585.4,335.4 586.8,335.5 588.3,335.5 589.7,335.5 591.2,335.5 592.7,335.5 594.1,335.5 595.6,335.5 597.1,335.5 598.5,335.6 600.0,335.6 601.4,335.6 602.9,335.6 604.4,335.6 605.8,335.6 605.8,337.1" fill="none" stroke="#f02020" stroke-width="1.1"/>
<line x1="152" x2="605.8" y1="340" y2="340" stroke="#d070d8" stroke-width="2.4"/>
<rect x="192.800" y="78" width="1" height="1.500" fill="#e8e8ff"/><rect x="192.800" y="339" width="1" height="1.200" fill="#f0d8f4"/>
<line x1="150.7" x2="150.7" y1="78" y2="341" stroke="#202020" stroke-width="1.4"/>
<path d="M605.8 78.5H665.5V340" fill="none" stroke="#707070" stroke-width="1"/>
</svg>
<div class="sb" style="left:140px;top:89px;width:10.5px;height:240.500px;background:#c7d7df;border-left-width:1.5px;border-left-color:#eef5f8;border-right-color:transparent"></div>
<div class="sb" style="left:140px;top:79px;width:10.5px;height:10px"></div>
<div class="sb" style="left:140px;top:329.5px;width:10.5px;height:10.5px"></div>
<div class="sb" style="left:163.500px;top:342.5px;width:490px;height:11px;background:#c7d7df;border-top-width:1.5px;border-top-color:#eef5f8;border-bottom-width:1.3px"></div>
<div class="sb" style="left:153px;top:342.5px;width:10.5px;height:11px"></div>
<div class="sb" style="left:653.5px;top:342.5px;width:12px;height:11px"></div>
<svg class="abs" style="left:0;top:0" width="720" height="540"><polygon points="142.4,85.3 147.6,85.3 145.0,82.2" fill="#111"/><polygon points="142.4,333.5 147.6,333.5 145.0,336.6" fill="#111"/><polygon points="159.3,345.4 159.3,350.6 156.2,348.0" fill="#111"/><polygon points="658.2,345.4 658.2,350.6 661.3,348.0" fill="#111"/></svg>
<div class="btn" style="left:74.500px;top:376.500px;width:49px;height:16px;line-height:13.500px;color:#111">Auto Scale</div>
<span class="t" style="left:75px;top:396.8px;font-size:9px">Step Size:</span>
<span class="t" style="left:128.5px;top:396.8px;font-size:9px">1</span>
<span class="t c" style="left:377.500px;top:393.500px;width:60px;font-size:9.600px">timesteps</span>

<!-- formula panel -->
<div class="panel" style="left:71px;top:410.5px;width:149px;height:81px">
<div class="ptitle">Formula<div class="pmenu"></div></div>
</div>
<div class="abs" style="left:76px;top:429px;width:138px;height:57px;box-sizing:border-box;background:#fff;border-top:1.5px solid #222;border-left:1.5px solid #222;border-right:1px solid #eee;border-bottom:1px solid #eee"></div>
<span class="fl" style="top:432.5px">X = Xv*(1-((n*dt/m)*Xv));</span>
<span class="fl" style="top:443.7px">U = X0;</span>
<span class="fl" style="top:455.2px">V = m;</span>
<span class="fl" style="top:466.3px">W = Y0;</span>
<span class="fl" style="top:477.3px">Y = Yv</span>
<div class="sb" style="left:202.5px;top:441.5px;width:10.5px;height:33px;background:#c9d8e0"></div>
<div class="sb" style="left:202.5px;top:430.5px;width:10.5px;height:11px"></div>
<div class="sb" style="left:202.5px;top:474.5px;width:10.5px;height:11px"></div>
<svg class="abs" style="left:0;top:0" width="720" height="540"><polygon points="205.1,437.3 210.3,437.3 207.7,434.2" fill="#111"/><polygon points="205.1,478.7 210.3,478.7 207.7,481.8" fill="#111"/></svg>

<!-- bottom -->
<div class="abs" style="left:0;top:522px;width:720px;height:1.5px;background:#1a1a1a"></div>
<div class="abs" style="left:0;top:523.5px;width:720px;height:6.5px;background:#808080"></div>
<div class="abs" style="left:0;top:530px;width:720px;height:1px;background:#fff"></div>
<div class="abs" style="left:0;top:531px;width:720px;height:9px;background:#c0c0c0"></div>
<span class="t" style="left:-16.5px;top:535.5px;font-size:8.8px;color:#111">Ready</span>
<div class="stbox" style="left:608px;width:30px">STD</div>
<div class="stbox" style="left:641px;width:31px;color:#8c8c8c;text-shadow:1px 1px 0 #fff">PROF</div>
<div class="stbox" style="left:675px;width:28px">MOD</div>
<div class="stbox" style="left:705px;width:30px;color:#8c8c8c;text-shadow:1px 1px 0 #fff;text-align:left;padding-left:3px">WEB</div>
</body></html>
